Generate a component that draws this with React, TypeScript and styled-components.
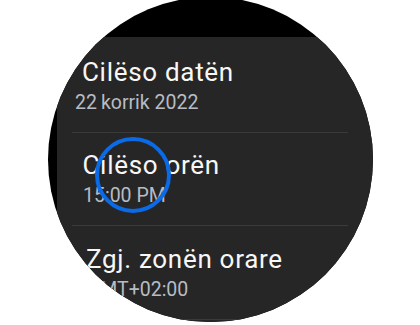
import styled, { createGlobalStyle } from 'styled-components';

const GlobalStyle = createGlobalStyle`
  html, body {
    margin: 0;
    padding: 0;
    background: #ffffff;
  }
  body {
    font-family: Roboto, "Noto Sans", "Liberation Sans", sans-serif;
  }
`;

const settings = [
  { title: 'Cilëso datën', value: '22\u2009korrik 2022', titleIndent: 25, valueIndent: 18, top: 19.5 },
  { title: 'Cilëso orën', value: '15:00 PM', titleIndent: 25.5, valueIndent: 26, top: 17.5 },
  { title: 'Zgj. zonën orare', value: 'GMT+02:00', titleIndent: 29, valueIndent: 30, top: 17.5 },
];

const Page = styled.div`
  display: flex;
  width: 420px;
  height: 325px;
  overflow: hidden;
`;

const Watch = styled.div`
  position: relative;
  flex: none;
  width: 325px;
  height: 325px;
  margin: -3px 0 0 48px;
  border-radius: 50%;
  overflow: hidden;
  background: #000000;
  display: flex;
  flex-direction: column;
`;

const Panel = styled.div`
  flex: 1;
  margin: 40px 0 0 9px;
  background: #262626;
  display: flex;
  flex-direction: column;
`;

const Row = styled.div<{ $top: number }>`
  display: flex;
  flex-direction: column;
  gap: 4px;
  padding: ${(p) => p.$top}px 0 17px;
`;

const Title = styled.div<{ $indent: number }>`
  padding-left: ${(p) => p.$indent}px;
  font-size: 26px;
  line-height: 30px;
  letter-spacing: 0.7px;
  color: #f7f7f7;
  white-space: nowrap;
`;

const Value = styled.div<{ $indent: number }>`
  padding-left: ${(p) => p.$indent}px;
  font-size: 19.5px;
  line-height: 24px;
  color: #b7bcc4;
  white-space: nowrap;
`;

const Divider = styled.div`
  flex: none;
  height: 1px;
  width: 276px;
  margin-left: 15px;
  background: #3a3a3a;
`;

const Ring = styled.div`
  position: absolute;
  left: 47px;
  top: 140px;
  width: 68px;
  height: 68px;
  border: 4px solid #0b6ae6;
  border-radius: 50%;
`;

export default function App() {
  return (
    <>
      <GlobalStyle />
      <Page>
        <Watch>
          <Panel>
            {settings.map((s) => (
              <div key={s.title}>
                <Row $top={s.top}>
                  <Title $indent={s.titleIndent}>{s.title}</Title>
                  <Value $indent={s.valueIndent}>{s.value}</Value>
                </Row>
                <Divider />
              </div>
            ))}
          </Panel>
          <Ring />
        </Watch>
      </Page>
    </>
  );
}
